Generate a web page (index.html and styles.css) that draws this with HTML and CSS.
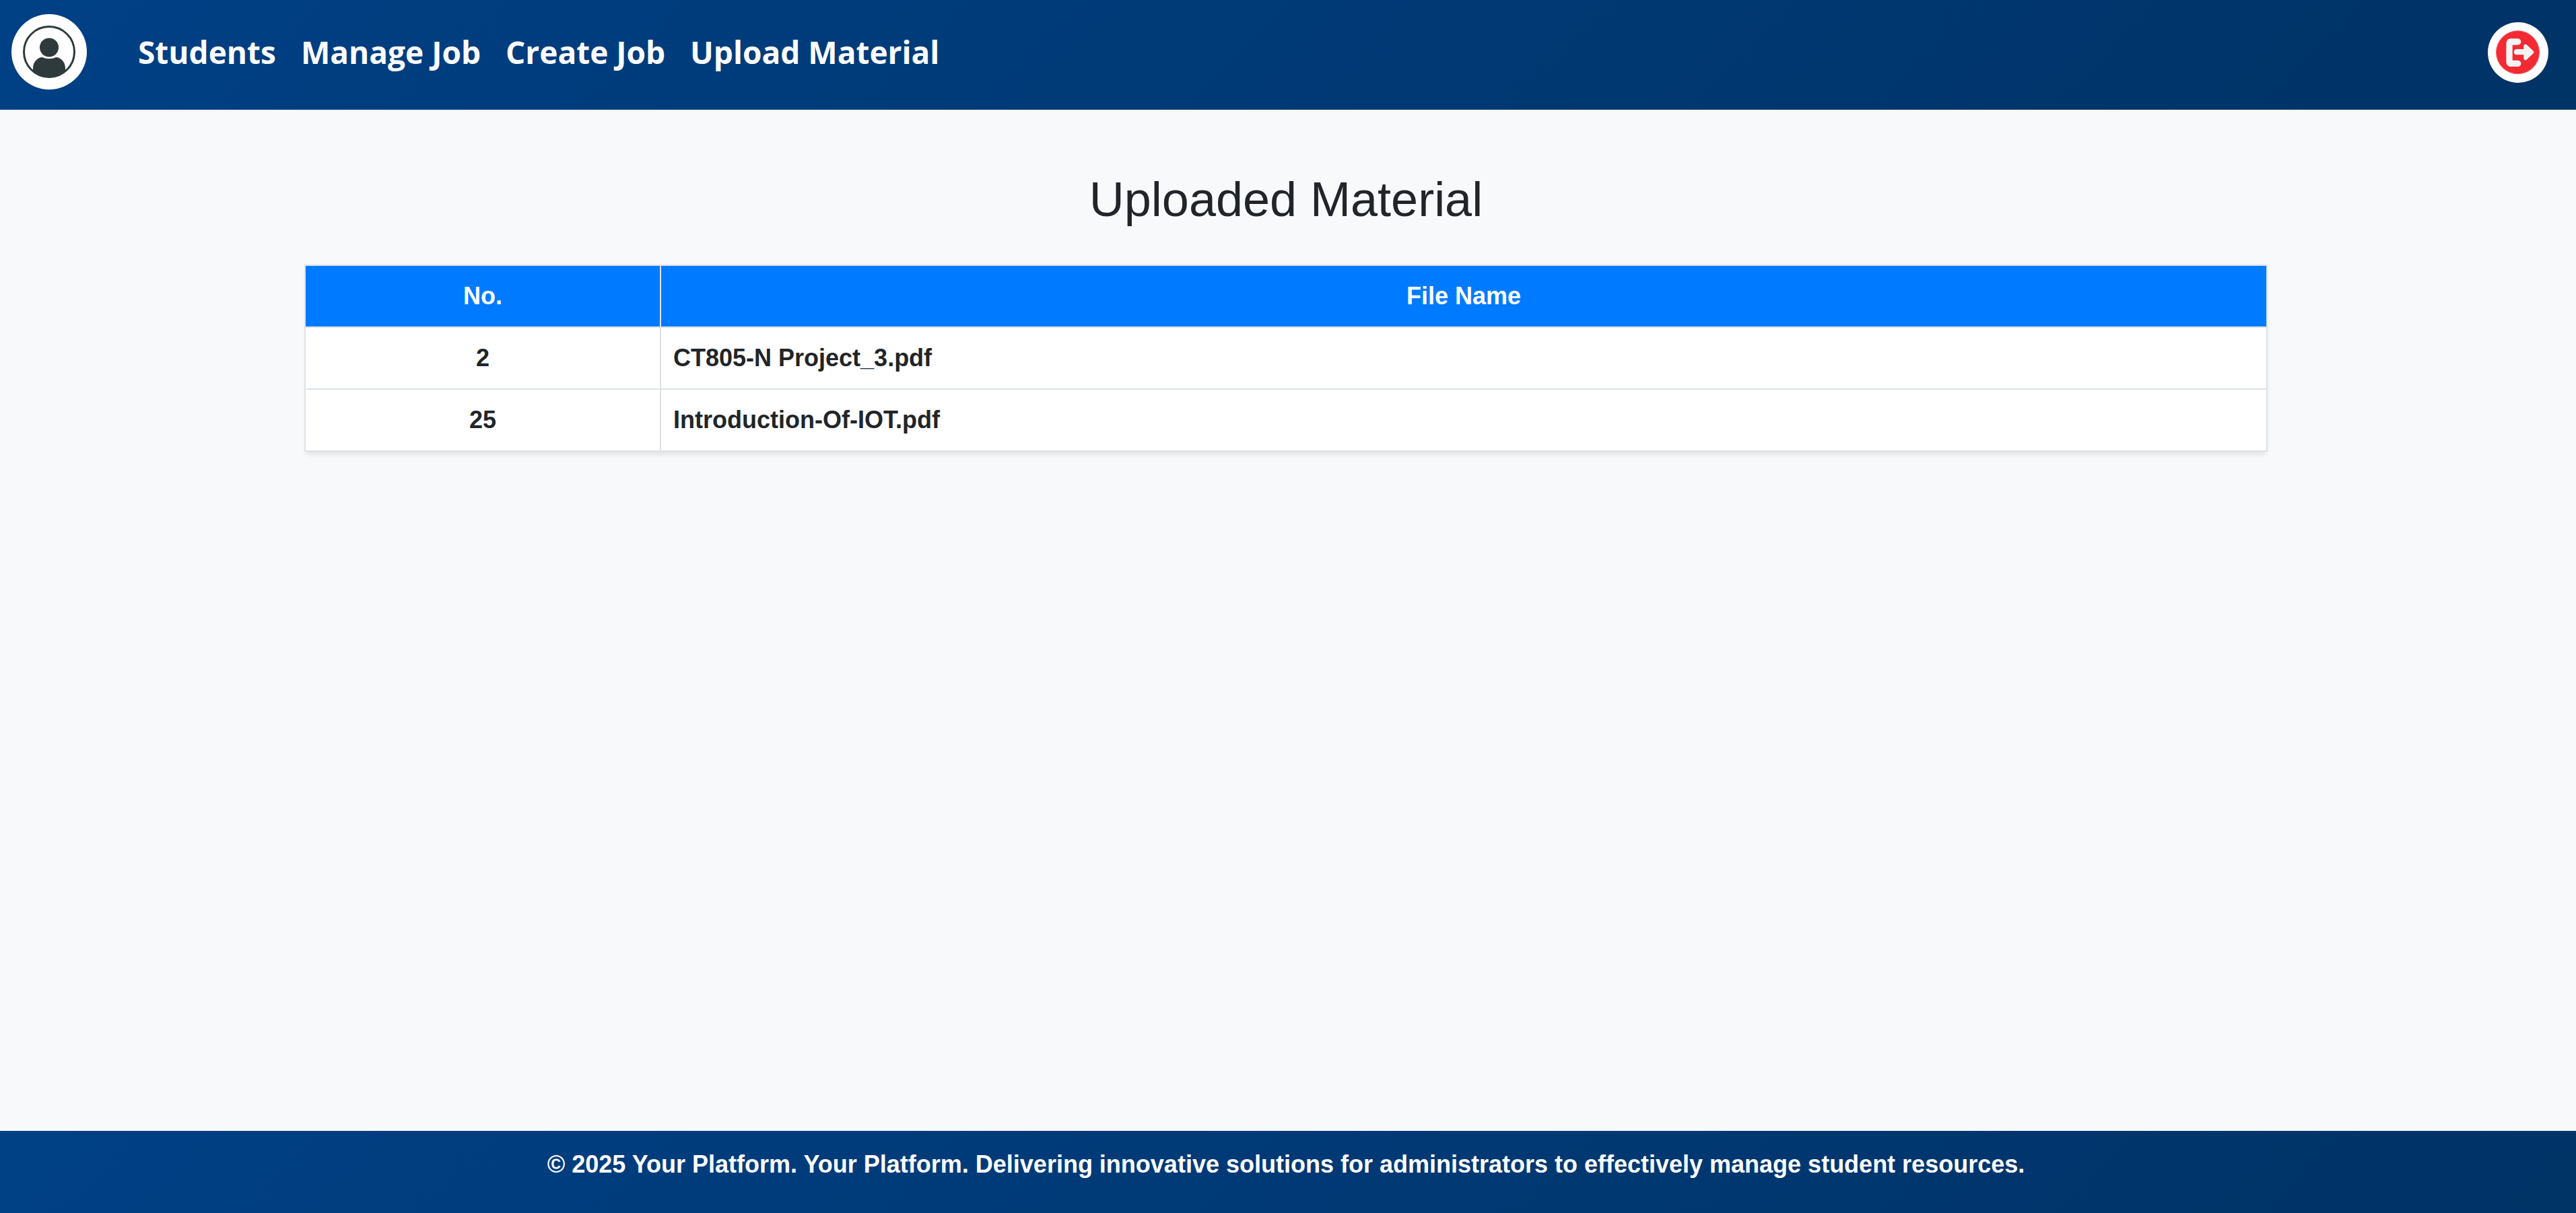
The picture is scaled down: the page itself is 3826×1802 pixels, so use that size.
FILE: index.html
```html
<!DOCTYPE html>
<html lang="en">
<head>
  <meta charset="UTF-8">
  <meta name="viewport" content="width=device-width, initial-scale=1.0">
  <title>Uploaded Material</title>
  <link rel="stylesheet" href="styles.css">
</head>
<body>
  <div class="page">
    <div class="header">
      <div class="header-logo">
        <svg viewBox="0 0 112 112" width="112" height="112">
          <defs>
            <clipPath id="ring-clip"><circle cx="56" cy="56" r="37.5"/></clipPath>
          </defs>
          <circle cx="56" cy="56" r="56" fill="#fff"/>
          <circle cx="56" cy="56" r="37.5" fill="none" stroke="#2f3a3d" stroke-width="3"/>
          <circle cx="56" cy="49.5" r="14" fill="#2f3a3d"/>
          <path clip-path="url(#ring-clip)" d="M32 100 V80 C32 71 39 64 46 64 C52 67 60 67 66 64 C73 64 80 71 80 80 V100 Z" fill="#2f3a3d"/>
        </svg>
      </div>
      <div class="nav">
        <a href="#">Students</a>
        <a href="#">Manage Job</a>
        <a href="#">Create Job</a>
        <a href="#">Upload Material</a>
      </div>
      <div class="logout">
        <svg viewBox="0 0 90 90" width="90" height="90">
          <circle cx="45" cy="45" r="45" fill="#fff"/>
          <circle cx="44.5" cy="44.8" r="32" fill="#f32a33" stroke="#f4626a" stroke-width="1"/>
          <path d="M44.7 29 H34 Q32 29 32 31 V59 Q32 61.4 34 61.4 H44.7" fill="none" stroke="#f3f3f3" stroke-width="9.3" stroke-linecap="round" stroke-linejoin="round"/>
          <path d="M43 44.2 H60" fill="none" stroke="#f3f3f3" stroke-width="8.3" stroke-linecap="round"/>
          <path d="M56 35.5 L65.5 44.4 L56 53.5 Z" fill="#f3f3f3" stroke="#f3f3f3" stroke-width="5.5" stroke-linejoin="round"/>
        </svg>
      </div>
    </div>

    <div class="content">
      <h1>Uploaded Material</h1>
      <table class="material-table">
        <thead>
          <tr>
            <th class="col-no">No.</th>
            <th>File Name</th>
          </tr>
        </thead>
        <tbody>
          <tr>
            <td class="col-no">2</td>
            <td>CT805-N Project_3.pdf</td>
          </tr>
          <tr>
            <td class="col-no">25</td>
            <td>Introduction-Of-IOT.pdf</td>
          </tr>
        </tbody>
      </table>
    </div>

    <div class="footer">
      <p>© 2025 Your Platform. Your Platform. Delivering innovative solutions for administrators to effectively manage student resources.</p>
    </div>
  </div>
</body>
</html>
```

FILE: styles.css
```css
body {
  margin: 0;
  font-family: "Liberation Sans", Arial, sans-serif;
  background-color: #f8f9fa;
  color: #212529;
}

.page {
  display: flex;
  flex-direction: column;
  height: 1802px;
}

.header {
  height: 163px;
  display: flex;
  align-items: flex-start;
  padding: 0 41px 0 17px;
  background: linear-gradient(135deg, #004085, #003366);
}

.header-logo {
  display: flex;
  margin: 21px 76px 0 0;
}

.nav {
  flex: 1;
  display: flex;
  gap: 37px;
  margin-top: 46px;
}

.nav a {
  color: #fff;
  font-family: "Open Sans", sans-serif;
  font-size: 46px;
  font-weight: 700;
  text-decoration: none;
}

.logout {
  display: flex;
  margin-top: 33px;
}

.content {
  flex: 1;
  padding: 0 458px 0 452px;
}

h1 {
  margin: 90px 0 54px;
  font-size: 72px;
  font-weight: 400;
  line-height: 1.2;
  text-align: center;
}

.material-table {
  width: 100%;
  border-collapse: collapse;
  background-color: #fff;
  box-shadow: 0 7px 8px -3px rgba(0, 0, 0, 0.1);
}

.material-table th,
.material-table td {
  height: 90px;
  padding: 0 18px;
  border: 2px solid #dee2e6;
  font-size: 36px;
  font-weight: 700;
  text-align: left;
}

.material-table th {
  background-color: #007bff;
  color: #fff;
  text-align: center;
}

.material-table .col-no {
  width: 490px;
  text-align: center;
}

.footer {
  height: 122px;
  padding-right: 6px;
  background: linear-gradient(135deg, #004085, #003366);
  color: #fff;
  text-align: center;
}

.footer p {
  margin: 0;
  padding-top: 29px;
  font-size: 36px;
  font-weight: 700;
}
```
